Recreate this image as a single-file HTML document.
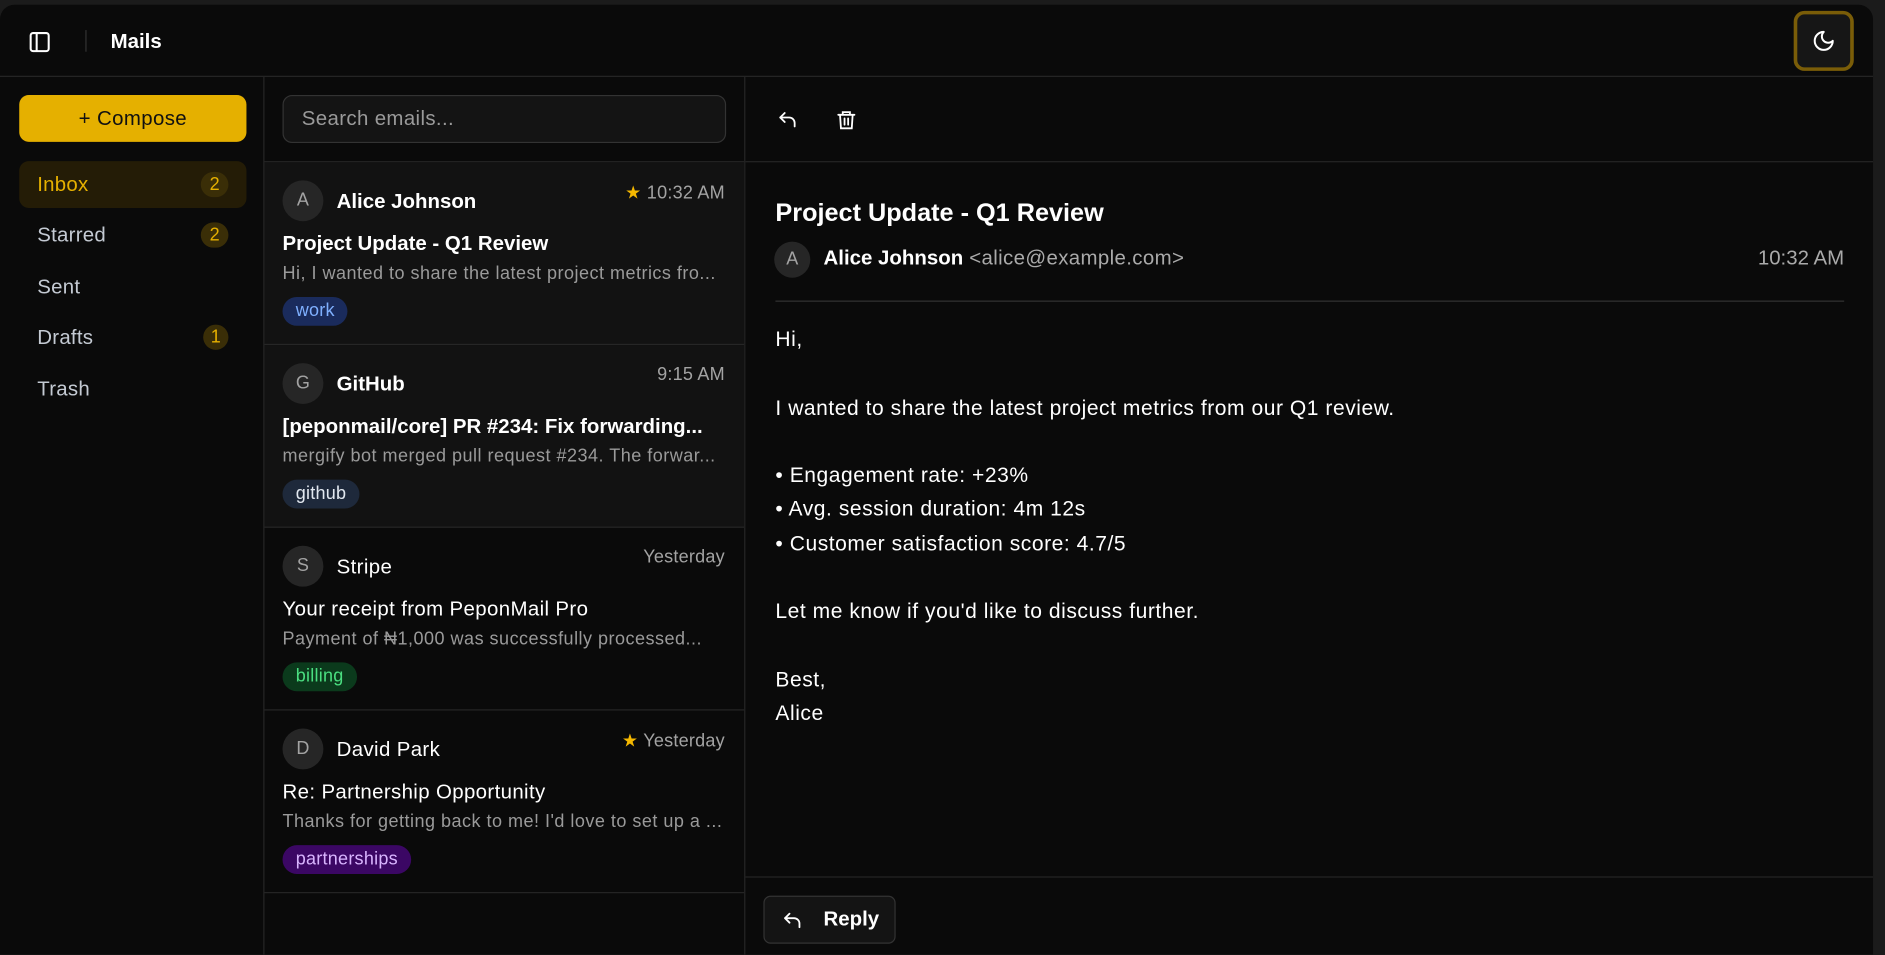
<!DOCTYPE html>
<html><head><meta charset="utf-8"><style>
*{box-sizing:border-box;margin:0;padding:0}
html,body{width:1885px;height:947px;overflow:hidden;background:#1b1b1b;font-family:"Liberation Sans",sans-serif}
#s{position:absolute;left:0;top:0;width:1568px;height:788px;transform:scale(1.2022);transform-origin:0 0}
.app{position:absolute;left:0;top:4px;width:1558px;height:790px;background:#0a0a0a;border-top-left-radius:12px;border-top-right-radius:12px;overflow:hidden}
.a{position:absolute}
.hdr{left:0;top:0;width:1558px;height:60px;border-bottom:1px solid #262626}
.side{left:0;top:60px;width:220px;height:730px;border-right:1px solid #262626}
.list{left:220px;top:60px;width:400px;height:730px;border-right:1px solid #262626}
.nav{position:absolute;left:16px;width:189px;height:39px;border-radius:8px;font-size:17px;color:#c4cad3;padding-left:15px;line-height:39px;letter-spacing:0.2px}
.badge{position:absolute;right:15px;top:9px;width:23px;height:21px;border-radius:11px;background:#3a2e07;color:#e5b000;font-size:15px;text-align:center;line-height:21px;letter-spacing:0}
.item{position:absolute;left:0;width:399px;height:152px;border-bottom:1px solid #262626}
.av{position:absolute;width:34px;height:34px;border-radius:50%;background:#262626;color:#a3a3a3;font-size:15px;text-align:center;line-height:34px}
.nm{position:absolute;left:60px;top:23px;font-size:17px;color:#fff}
.tm{position:absolute;right:16px;top:16px;font-size:15px;color:#a3a3a3;letter-spacing:0.2px}
.sb{position:absolute;left:15px;top:58px;font-size:17px;color:#fff;white-space:nowrap}
.sb.r{letter-spacing:0.3px}
.pv{position:absolute;left:15px;top:84px;font-size:15px;color:#9a9a9a;white-space:nowrap;letter-spacing:0.4px}
.tag{position:absolute;left:15px;top:112px;height:24px;line-height:24px;padding:0 11px;border-radius:12px;font-size:15px;letter-spacing:0.2px}
.body div{height:28.3px;font-size:17.5px;color:#fff;letter-spacing:0.45px}
</style></head><body><div id="s">
<div class="app">
 <div class="a hdr">
  <svg class="a" style="left:24px;top:22px" width="18" height="18" viewBox="0 0 18 18" fill="none" stroke="#fff" stroke-width="1.7"><rect x="1.5" y="1.5" width="15" height="15" rx="2"/><line x1="6.5" y1="1.5" x2="6.5" y2="16.5"/></svg>
  <div class="a" style="left:71px;top:21px;width:1px;height:18px;background:#333"></div>
  <div class="a" style="left:92px;top:21px;font-size:17px;font-weight:bold;color:#fff">Mails</div>
  <div class="a" style="left:1492px;top:5px;width:50px;height:50px;border:3px solid #7a5d08;border-radius:9px;background:#161616"></div>
  <svg class="a" style="left:1507px;top:20px" width="20" height="20" viewBox="0 0 24 24" fill="none" stroke="#fff" stroke-width="2" stroke-linecap="round" stroke-linejoin="round"><path d="M12 3a6 6 0 0 0 9 9 9 9 0 1 1-9-9Z"/></svg>
 </div>
 <div class="a side">
  <div class="a" style="left:16px;top:15px;width:189px;height:39px;border-radius:8px;background:#e5b000;color:#111;font-size:17px;text-align:center;line-height:39px;letter-spacing:0.3px">+ Compose</div>
  <div class="nav" style="top:70px;background:#241c06;color:#e5b000">Inbox<span class="badge">2</span></div>
  <div class="nav" style="top:112px">Starred<span class="badge">2</span></div>
  <div class="nav" style="top:155px">Sent</div>
  <div class="nav" style="top:197px">Drafts<span class="badge" style="width:21px">1</span></div>
  <div class="nav" style="top:240px">Trash</div>
 </div>
 <div class="a list">
  <div class="a" style="left:15px;top:15px;width:369px;height:40px;border:1px solid #333;border-radius:8px;background:#141414;color:#9a9a9a;font-size:17px;line-height:38px;padding-left:15px;letter-spacing:0.3px">Search emails...</div>
  <div class="a" style="left:0;top:70px;width:399px;height:1px;background:#262626"></div>
  <div class="item" style="top:71px;background:#121212">
   <div class="av" style="left:15px;top:15px">A</div><div class="nm" style="font-weight:bold">Alice Johnson</div>
   <div class="tm"><span style="color:#f5b800">★</span> 10:32 AM</div>
   <div class="sb" style="font-weight:bold">Project Update - Q1 Review</div>
   <div class="pv">Hi, I wanted to share the latest project metrics fro...</div>
   <div class="tag" style="background:#1a2b5c;color:#7fb0ff">work</div>
  </div>
  <div class="item" style="top:223px;background:#121212">
   <div class="av" style="left:15px;top:15px">G</div><div class="nm" style="font-weight:bold">GitHub</div>
   <div class="tm">9:15 AM</div>
   <div class="sb" style="font-weight:bold">[peponmail/core] PR #234: Fix forwarding...</div>
   <div class="pv">mergify bot merged pull request #234. The forwar...</div>
   <div class="tag" style="background:#1e293b;color:#e2e8f0">github</div>
  </div>
  <div class="item" style="top:375px">
   <div class="av" style="left:15px;top:15px">S</div><div class="nm" style="letter-spacing:0.3px">Stripe</div>
   <div class="tm">Yesterday</div>
   <div class="sb r">Your receipt from PeponMail Pro</div>
   <div class="pv">Payment of ₦1,000 was successfully processed...</div>
   <div class="tag" style="background:#0b3a1c;color:#4ade80">billing</div>
  </div>
  <div class="item" style="top:527px">
   <div class="av" style="left:15px;top:15px">D</div><div class="nm" style="letter-spacing:0.3px">David Park</div>
   <div class="tm"><span style="color:#f5b800">★</span> Yesterday</div>
   <div class="sb r">Re: Partnership Opportunity</div>
   <div class="pv">Thanks for getting back to me! I'd love to set up a ...</div>
   <div class="tag" style="background:#3b0764;color:#d8b4fe">partnerships</div>
  </div>
 </div>
 <div class="a" style="left:620px;top:60px;width:938px;height:730px">
  <svg class="a" style="left:26px;top:27px" width="18" height="18" viewBox="0 0 24 24" fill="none" stroke="#fff" stroke-width="2" stroke-linecap="round" stroke-linejoin="round"><path d="M9 14 4 9l5-5"/><path d="M4 9h10a6 6 0 0 1 6 6v4"/></svg>
  <svg class="a" style="left:75px;top:26px" width="18" height="20" viewBox="0 0 24 24" fill="none" stroke="#fff" stroke-width="2" stroke-linecap="round"><path d="M3 6h18M8 6V3h8v3M5 6l1 15h12l1-15M10 10v7M14 10v7"/></svg>
  <div class="a" style="left:0;top:70px;width:938px;height:1px;background:#262626"></div>
  <div class="a" style="left:25px;top:102px;font-size:21px;font-weight:bold;color:#fff">Project Update - Q1 Review</div>
  <div class="av" style="left:24px;top:137px;width:30px;height:30px;line-height:30px">A</div>
  <div class="a" style="left:65px;top:141px;font-size:17px;color:#aaa;letter-spacing:0.3px"><b style="color:#fff;letter-spacing:0">Alice Johnson</b> &lt;alice@example.com&gt;</div>
  <div class="a" style="right:24px;top:141px;font-size:17px;color:#aaa">10:32 AM</div>
  <div class="a" style="left:25px;top:186px;width:889px;height:1px;background:#333"></div>
  <div class="a body" style="left:25px;top:208px;width:880px">
   <div>Hi,</div><div></div>
   <div>I wanted to share the latest project metrics from our Q1 review.</div><div></div>
   <div>• Engagement rate: +23%</div><div>• Avg. session duration: 4m 12s</div><div>• Customer satisfaction score: 4.7/5</div><div></div>
   <div>Let me know if you'd like to discuss further.</div><div></div>
   <div>Best,</div><div>Alice</div>
  </div>
  <div class="a" style="left:0;top:665px;width:938px;height:1px;background:#262626"></div>
  <div class="a" style="left:15px;top:681px;width:110px;height:40px;border:1px solid #333;border-radius:6px;background:#141414">
   <svg class="a" style="left:14px;top:11px" width="18" height="18" viewBox="0 0 24 24" fill="none" stroke="#fff" stroke-width="2" stroke-linecap="round" stroke-linejoin="round"><path d="M9 14 4 9l5-5"/><path d="M4 9h10a6 6 0 0 1 6 6v4"/></svg>
   <div class="a" style="left:49px;top:9px;font-size:17px;font-weight:bold;color:#fff">Reply</div>
  </div>
 </div>
</div>
</div></body></html>
